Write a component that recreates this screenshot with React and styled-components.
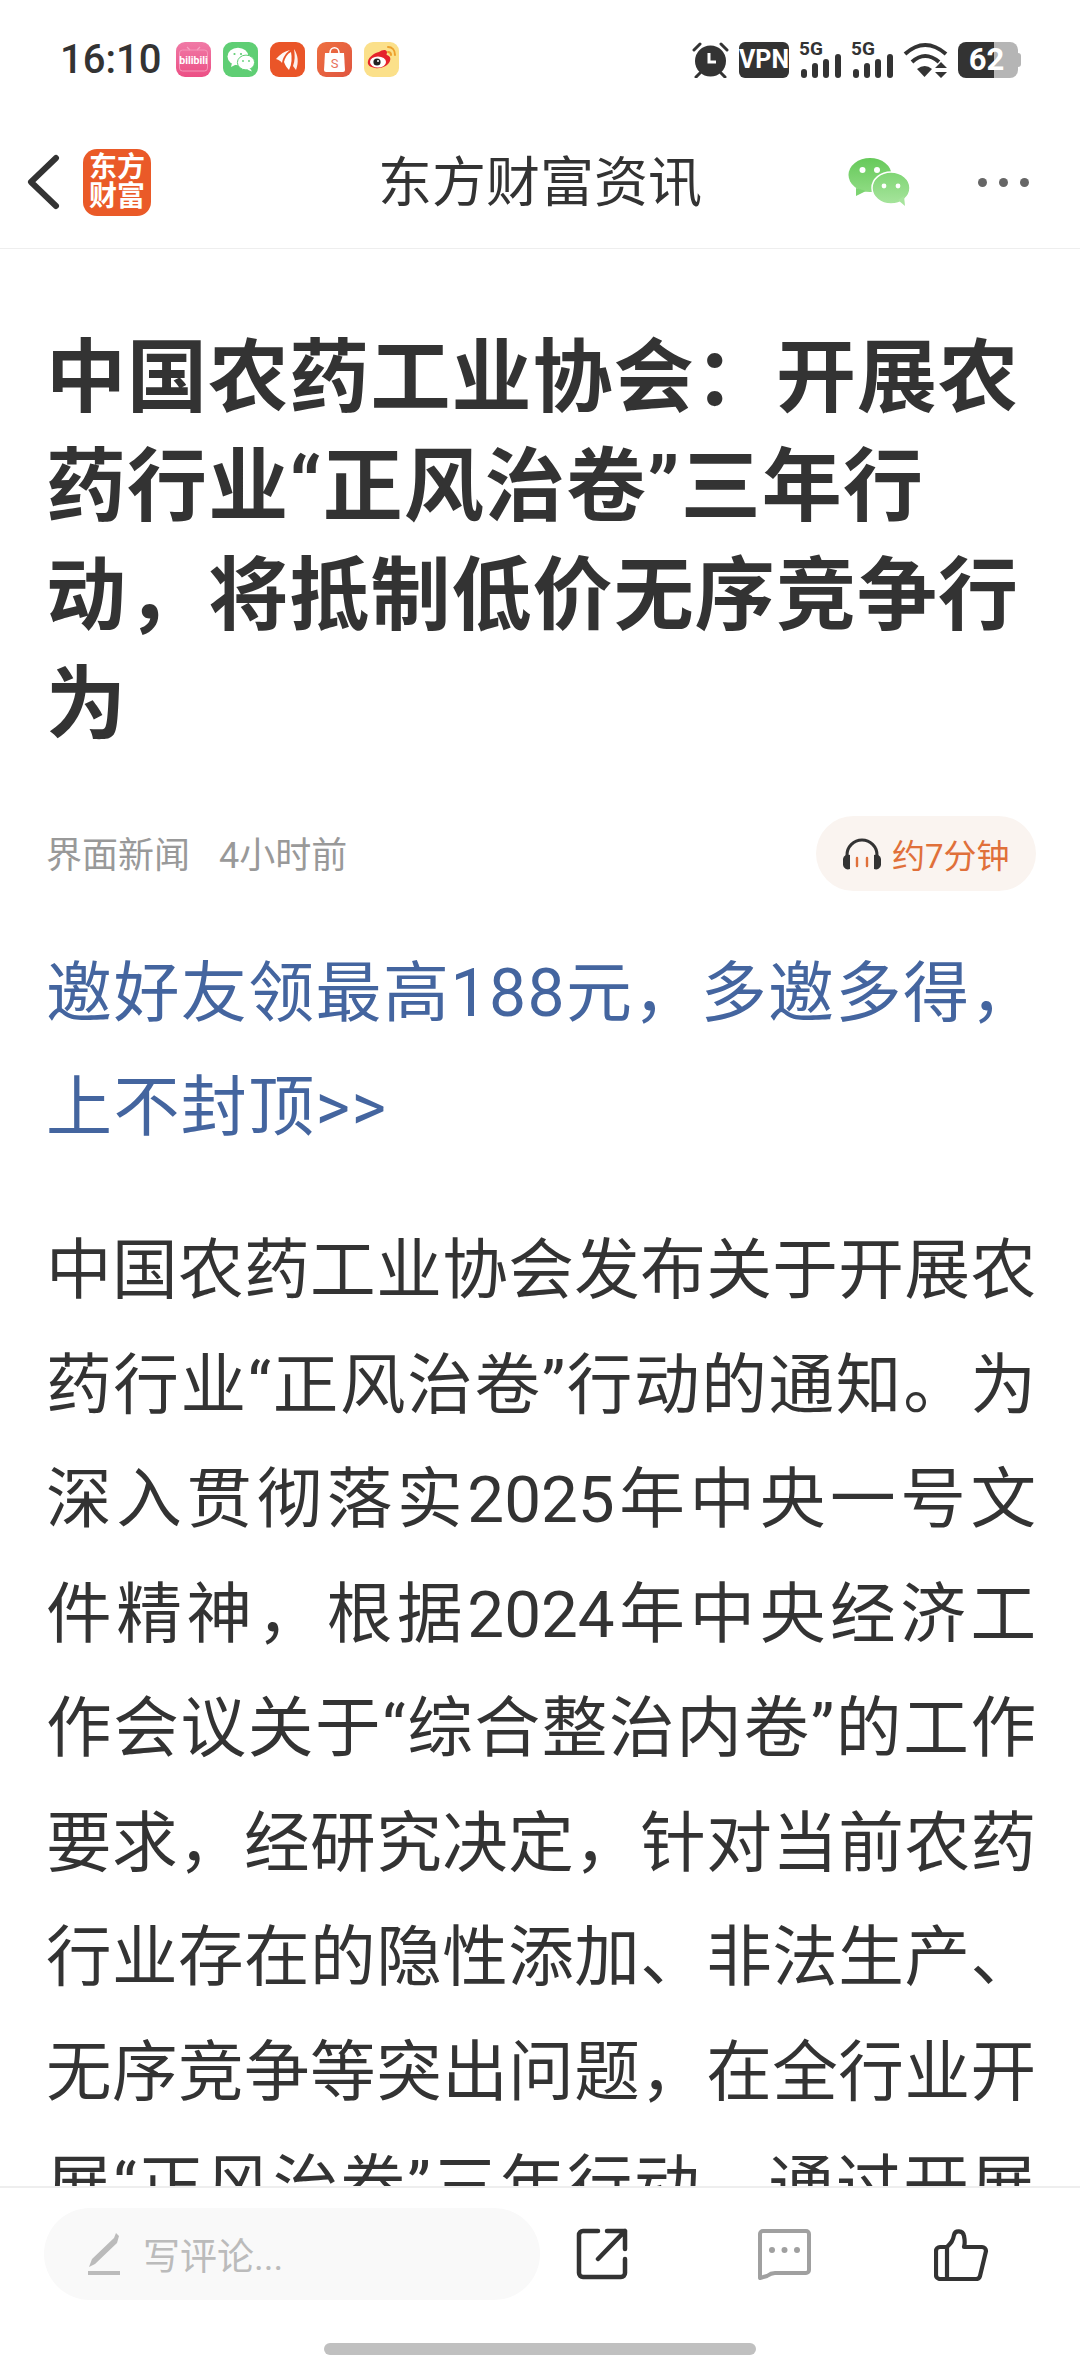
import React from 'react'
import styled, { createGlobalStyle } from 'styled-components'

const FONT = `Roboto, "Noto Sans CJK SC", sans-serif`

// full-width punctuation, kept as escapes
const COLON = '\uFF1A'
const COMMA = '\uFF0C'
const PERIOD = '\u3002'

const TITLE = [
  `中国农药工业协会${COLON}开展农`,
  '药行业“正风治卷”三年行',
  `动${COMMA}将抵制低价无序竞争行`,
  '为',
]

const LINK = [`邀好友领最高188元${COMMA}多邀多得${COMMA}`, '上不封顶>>']

const BODY = [
  '中国农药工业协会发布关于开展农',
  `药行业“正风治卷”行动的通知${PERIOD}为`,
  '深入贯彻落实2025年中央一号文',
  `件精神${COMMA}根据2024年中央经济工`,
  '作会议关于“综合整治内卷”的工作',
  `要求${COMMA}经研究决定${COMMA}针对当前农药`,
  '行业存在的隐性添加、非法生产、',
  `无序竞争等突出问题${COMMA}在全行业开`,
  `展“正风治卷”三年行动${COMMA}通过开展`,
]

const Bilibili = () => (
  <svg width="35" height="35" viewBox="0 0 35 35">
    <defs>
      <linearGradient id="bili" x1="0" y1="0" x2="0" y2="1">
        <stop offset="0" stopColor="#f07aa6" />
        <stop offset="1" stopColor="#ec4f85" />
      </linearGradient>
    </defs>
    <rect width="35" height="35" rx="9" fill="url(#bili)" />
    <path d="M11 5l3 3M24 5l-3 3" stroke="#f7a5c4" strokeWidth="1.2" />
    <rect x="3.5" y="8" width="28" height="21" rx="3" fill="none" stroke="#f595b8" strokeWidth="1" />
    <text x="17.5" y="22" textAnchor="middle" fontSize="10.5" fontWeight="700" fill="#fff" fontFamily="Roboto, sans-serif">bilibili</text>
  </svg>
)

const WechatApp = () => (
  <svg width="35" height="35" viewBox="0 0 35 35">
    <rect width="35" height="35" rx="9" fill="#5fce74" />
    <ellipse cx="15" cy="14.5" rx="10.5" ry="8.8" fill="#fff" />
    <path d="M9 21l-1 4 5-2.5z" fill="#fff" />
    <ellipse cx="23" cy="20.5" rx="8.6" ry="7.4" fill="#fff" stroke="#5fce74" strokeWidth="1" />
    <path d="M27 26.5l2 3-5-2z" fill="#fff" />
    <circle cx="11.5" cy="12" r="1.1" fill="#5fce74" />
    <circle cx="18" cy="12" r="1.1" fill="#5fce74" />
    <circle cx="20" cy="19" r="0.9" fill="#5fce74" />
    <circle cx="26" cy="19" r="0.9" fill="#5fce74" />
  </svg>
)

const FeatherApp = () => (
  <svg width="35" height="35" viewBox="0 0 35 35">
    <rect width="35" height="35" rx="9" fill="#ea5528" />
    <path d="M6 17c4-5 9-8 14-9-4 3-7 7-8 13-1-2-3-3-6-4z" fill="#fff" opacity="0.95" />
    <path d="M21 10c1 6 1 12-2 18-2-2-4-5-5-8 1-4 3-8 7-10z" fill="#fff" />
    <path d="M24 7c4 6 5 13 2 21-1-1-2-3-3-4 2-5 2-11 1-17z" fill="#fff" opacity="0.9" />
  </svg>
)

const ShopApp = () => (
  <svg width="35" height="35" viewBox="0 0 35 35">
    <defs>
      <linearGradient id="shop" x1="0" y1="0" x2="1" y2="1">
        <stop offset="0" stopColor="#ee7040" />
        <stop offset="1" stopColor="#e05540" />
      </linearGradient>
    </defs>
    <rect width="35" height="35" rx="9" fill="url(#shop)" />
    <path d="M8 11h19l1 17a2 2 0 0 1-2 2H9a2 2 0 0 1-2-2z" fill="#fff" />
    <path d="M13 11c0-7 9-7 9 0" fill="none" stroke="#fff" strokeWidth="1.6" />
    <text x="17.5" y="26" textAnchor="middle" fontSize="13" fill="#e8705a" fontFamily="Roboto, sans-serif">S</text>
  </svg>
)

const WeiboApp = () => (
  <svg width="35" height="35" viewBox="0 0 35 35">
    <rect width="35" height="35" rx="9" fill="#fbe08a" />
    <path d="M24 5c4 0 7 3 7 8M24 10c2 0 3 1 3 3" fill="none" stroke="#eda02c" strokeWidth="2" strokeLinecap="round" />
    <path d="M15 10c3-2 7-3 8 0 0 2-1 3 0 3 3 1 4 3 3 6-2 5-9 8-15 7-5-1-8-3-7-7 1-4 6-8 11-9z" fill="#e5232c" />
    <ellipse cx="14" cy="20" rx="8" ry="5.6" fill="#fff" />
    <circle cx="13" cy="20" r="3.6" fill="#222" />
    <circle cx="14" cy="19" r="1" fill="#fff" />
  </svg>
)

const AlarmIcon = () => (
  <svg width="37" height="36" viewBox="0 0 37 36">
    <circle cx="18.5" cy="19" r="15.5" fill="#333" />
    <path d="M2 8l6-6M35 8l-6-6M4 35l4-4M33 35l-4-4" stroke="#333" strokeWidth="3" strokeLinecap="round" />
    <path d="M17 11v9h7" fill="none" stroke="#fff" strokeWidth="3" />
  </svg>
)

const SignalIcon = () => (
  <SignalGroup>
    <SignalLabel>5G</SignalLabel>
    <svg width="42" height="24" viewBox="0 0 42 24">
      <rect x="2" y="15" width="6" height="9" rx="3" fill="#333" />
      <rect x="13" y="9" width="6" height="15" rx="3" fill="#333" />
      <rect x="24" y="5" width="6" height="19" rx="3" fill="#333" />
      <rect x="36" y="0" width="6" height="24" rx="3" fill="#333" />
    </svg>
  </SignalGroup>
)

const WifiIcon = () => (
  <svg width="45" height="36" viewBox="0 0 45 36">
    <path d="M2 12Q22-6 43 12M9 20Q22 8 36 20" fill="none" stroke="#333" strokeWidth="4" />
    <path d="M14 27Q22 21 29 27L21.5 35z" fill="#333" />
    <path d="M38 20l6 6H32zM38 36l6-6H32z" fill="#333" />
  </svg>
)

const BackIcon = () => (
  <svg width="34" height="56" viewBox="0 0 34 56">
    <path d="M30 4L5 28l25 24" fill="none" stroke="#333" strokeWidth="6" strokeLinecap="round" strokeLinejoin="round" />
  </svg>
)

const WechatIcon = () => (
  <svg width="62" height="48" viewBox="0 0 62 48">
    <defs>
      <linearGradient id="wxa" x1="0" y1="0" x2="0" y2="1">
        <stop offset="0" stopColor="#66c95a" />
        <stop offset="1" stopColor="#8edb82" />
      </linearGradient>
      <linearGradient id="wxb" x1="0" y1="0" x2="0" y2="1">
        <stop offset="0" stopColor="#7fd574" />
        <stop offset="1" stopColor="#a6e49c" />
      </linearGradient>
    </defs>
    <ellipse cx="22" cy="17" rx="21.5" ry="17" fill="url(#wxa)" />
    <path d="M8 30l0 8 10-5z" fill="#7cd371" />
    <ellipse cx="43" cy="30" rx="19" ry="16" fill="url(#wxb)" stroke="#fff" strokeWidth="1.5" />
    <path d="M50 42l7 6-1-10z" fill="#a6e49c" />
    <circle cx="14.5" cy="12" r="3" fill="#fff" />
    <circle cx="29" cy="12" r="3" fill="#fff" />
    <circle cx="36" cy="28" r="2.4" fill="#fff" />
    <circle cx="50" cy="28" r="2.4" fill="#fff" />
  </svg>
)

const HeadphoneIcon = () => (
  <svg width="40" height="33" viewBox="0 0 40 33">
    <path d="M5 22V18a15 15 0 0 1 30 0v4" fill="none" stroke="#333" strokeWidth="3" />
    <path d="M1 22a5 5 0 0 1 7-4v14a5 5 0 0 1-7-4zM39 22a5 5 0 0 0-7-4v14a5 5 0 0 0 7-4z" fill="#333" />
    <path d="M15 21v8M25 21v8" stroke="#e0703a" strokeWidth="2.4" strokeLinecap="round" />
  </svg>
)

const PencilIcon = () => (
  <svg width="32" height="42" viewBox="0 0 32 42">
    <path d="M28 0l3 3-2 7L7 31l-6 3 3-8L26 5z" fill="#bbb" />
    <rect x="0" y="38" width="32" height="4" fill="#bbb" />
  </svg>
)

const ShareIcon = () => (
  <svg width="52" height="52" viewBox="0 0 52 52">
    <path d="M22 3H7a4 4 0 0 0-4 4v38a4 4 0 0 0 4 4h38a4 4 0 0 0 4-4V31" fill="none" stroke="#333" strokeWidth="4.5" strokeLinecap="round" />
    <path d="M31 3h18v18M49 3L22 31" fill="none" stroke="#333" strokeWidth="4.5" strokeLinecap="round" strokeLinejoin="round" />
  </svg>
)

const CommentIcon = () => (
  <svg width="55" height="52" viewBox="0 0 55 52">
    <path d="M3 6a3 3 0 0 1 3-3h43a3 3 0 0 1 3 3v36a3 3 0 0 1-3 3H18q-4 0-8 3l-7 2z" fill="none" stroke="#a0a0a0" strokeWidth="4" strokeLinejoin="round" />
    <circle cx="15" cy="22" r="3" fill="#a0a0a0" />
    <circle cx="27.5" cy="22" r="3" fill="#a0a0a0" />
    <circle cx="40" cy="22" r="3" fill="#a0a0a0" />
  </svg>
)

const ThumbIcon = () => (
  <svg width="55" height="54" viewBox="0 0 55 54">
    <path d="M13 20H6a4 4 0 0 0-4 4v24a4 4 0 0 0 4 4h36a4 4 0 0 0 4-3l6-25a4 4 0 0 0-4-4H30c1-3 1-6 0-11-1-6-9-6-10-1-1 6-3 8-7 12zM13 20v32" fill="none" stroke="#333" strokeWidth="4.2" strokeLinejoin="round" />
  </svg>
)

export default function App() {
  return (
    <Page>
      <GlobalStyle />
      <StatusBar>
        <Time>16:10</Time>
        <AppIcons>
          <Bilibili />
          <WechatApp />
          <FeatherApp />
          <ShopApp />
          <WeiboApp />
        </AppIcons>
        <StatusRight>
          <AlarmIcon />
          <VpnBadge>VPN</VpnBadge>
          <SignalIcon />
          <SignalIcon />
          <WifiIcon />
          <Battery>62</Battery>
        </StatusRight>
      </StatusBar>

      <NavBar>
        <NavLeft>
          <BackIcon />
          <Logo>
            <span>东方</span>
            <span>财富</span>
          </Logo>
        </NavLeft>
        <NavTitle>东方财富资讯</NavTitle>
        <NavRight>
          <WechatIcon />
          <MoreDots>
            <i />
            <i />
            <i />
          </MoreDots>
        </NavRight>
      </NavBar>

      <Article>
        <Title>
          {TITLE.map((line) => (
            <Line key={line}>{line}</Line>
          ))}
        </Title>
        <MetaRow>
          <Source>
            <span>界面新闻</span>
            <span>4小时前</span>
          </Source>
          <ListenPill>
            <HeadphoneIcon />
            约7分钟
          </ListenPill>
        </MetaRow>
        <PromoLink>
          {LINK.map((line) => (
            <Line key={line}>{line}</Line>
          ))}
        </PromoLink>
        <Body>
          {BODY.map((line) => (
            <BodyLine key={line}>{line}</BodyLine>
          ))}
        </Body>
      </Article>

      <BottomBar>
        <ActionRow>
          <CommentInput>
            <PencilIcon />
            写评论...
          </CommentInput>
          <Actions>
            <ShareIcon />
            <CommentIcon />
            <ThumbIcon />
          </Actions>
        </ActionRow>
        <HomeIndicator />
      </BottomBar>
    </Page>
  )
}

const GlobalStyle = createGlobalStyle`
  html, body {
    margin: 0;
    padding: 0;
    background: #fff;
  }
`

const Page = styled.div`
  width: 1080px;
  height: 2376px;
  display: flex;
  flex-direction: column;
  overflow: hidden;
  background: #fff;
  font-family: ${FONT};
  color: #333;
`

const StatusBar = styled.div`
  height: 116px;
  box-sizing: border-box;
  padding: 42px 62px 0 60px;
  display: flex;
  align-items: flex-start;
  flex: none;
`

const Time = styled.div`
  width: 116px;
  font-size: 40px;
  font-weight: 500;
  line-height: 36px;
  color: #333;
`

const AppIcons = styled.div`
  display: flex;
  gap: 12px;
`

const StatusRight = styled.div`
  margin-left: auto;
  display: flex;
  gap: 10px;
  align-items: flex-start;
`

const VpnBadge = styled.div`
  width: 50px;
  height: 36px;
  border-radius: 6px;
  background: #333;
  color: #fff;
  font-size: 25px;
  font-weight: 700;
  line-height: 36px;
  text-align: center;
`

const SignalGroup = styled.div`
  width: 42px;
  height: 36px;
  display: flex;
  flex-direction: column;

  svg {
    display: block;
  }
`

const SignalLabel = styled.div`
  height: 12px;
  font-size: 19px;
  font-weight: 700;
  line-height: 14px;
  color: #333;
`

const Battery = styled.div`
  position: relative;
  width: 60px;
  height: 36px;
  border-radius: 8px;
  background: linear-gradient(90deg, #333 0 36px, #b5b5b5 36px);
  color: #fff;
  font-size: 31px;
  font-weight: 700;
  line-height: 36px;
  text-align: center;
  padding-right: 3px;
  box-sizing: border-box;

  &::after {
    content: '';
    position: absolute;
    right: -3px;
    top: 11px;
    width: 3px;
    height: 14px;
    border-radius: 0 3px 3px 0;
    background: #b5b5b5;
  }
`

const NavBar = styled.div`
  height: 133px;
  box-sizing: border-box;
  border-bottom: 1px solid #eee;
  display: grid;
  grid-template-columns: 1fr auto 1fr;
  align-items: center;
  flex: none;
`

const NavLeft = styled.div`
  display: flex;
  align-items: center;
  gap: 23px;
  padding-left: 26px;
`

const Logo = styled.div`
  width: 68px;
  height: 67px;
  border-radius: 14px;
  background: #ea5a28;
  color: #fff;
  font-size: 28px;
  font-weight: 700;
  line-height: 29px;
  display: flex;
  flex-direction: column;
  align-items: center;
  justify-content: center;
`

const NavTitle = styled.div`
  font-size: 54px;
  color: #333;
  line-height: 64px;
  padding-top: 4px;
`

const NavRight = styled.div`
  display: flex;
  align-items: center;
  justify-content: flex-end;
  gap: 68px;
  padding-right: 51px;
`

const MoreDots = styled.div`
  display: flex;
  gap: 12px;

  i {
    width: 9px;
    height: 9px;
    border-radius: 50%;
    background: #666;
  }
`

const Article = styled.div`
  flex: 1;
  min-height: 0;
  overflow: hidden;
  padding: 75px 44px 0 46px;
`

const Line = styled.div`
  white-space: nowrap;
`

const Title = styled.h1`
  margin: 0;
  font-size: 80px;
  font-weight: 700;
  line-height: 109px;
  letter-spacing: 1.1px;
  color: #333;
`

const MetaRow = styled.div`
  margin-top: 56px;
  display: flex;
  align-items: center;
  justify-content: space-between;
`

const Source = styled.div`
  display: flex;
  gap: 29px;
  font-size: 36px;
  color: #999;
  padding-bottom: 4px;
`

const ListenPill = styled.div`
  height: 75px;
  width: 220px;
  box-sizing: border-box;
  padding-left: 26px;
  border-radius: 38px;
  background: #faf4f0;
  color: #e0703a;
  font-size: 33px;
  display: flex;
  align-items: center;
  gap: 10px;
`

const PromoLink = styled.div`
  margin-top: 46px;
  font-size: 66px;
  line-height: 114px;
  letter-spacing: 1.4px;
  color: #44659f;
`

const Body = styled.div`
  margin-top: 49px;
  font-size: 65.6px;
  line-height: 114.5px;
  color: #333;
`

const BodyLine = styled.div`
  white-space: nowrap;
  text-align: justify;
  text-align-last: justify;
`

const BottomBar = styled.div`
  height: 190px;
  box-sizing: border-box;
  flex: none;
  border-top: 2px solid #eee;
  background: #fff;
  padding-top: 20px;
  display: flex;
  flex-direction: column;
`

const ActionRow = styled.div`
  display: flex;
  align-items: center;
  padding-left: 44px;
`

const CommentInput = styled.div`
  width: 496px;
  height: 92px;
  box-sizing: border-box;
  padding-left: 44px;
  border-radius: 46px;
  background: #f9f9f9;
  color: #bbb;
  font-size: 37px;
  display: flex;
  align-items: center;
  gap: 23px;
`

const Actions = styled.div`
  display: grid;
  grid-template-columns: 181px 177px auto;
  align-items: center;
  margin-left: 36px;
`

const HomeIndicator = styled.div`
  width: 432px;
  height: 12px;
  border-radius: 6px;
  background: #c0c0c0;
  margin: 43px auto 0;
`
